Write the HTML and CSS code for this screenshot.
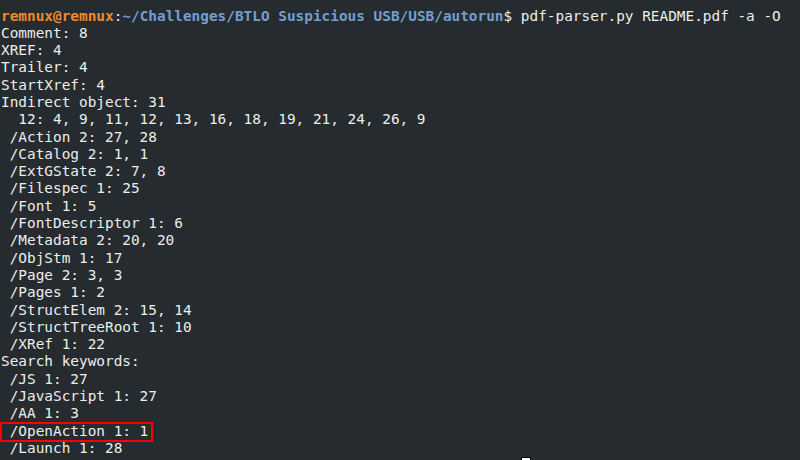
FILE: index.html
```html
<!DOCTYPE html>
<html>
<head>
<meta charset="utf-8">
<link rel="stylesheet" href="styles.css">
</head>
<body>
<pre class="term"><span class="user">remnux@remnux</span>:<span class="path">~/Challenges/BTLO Suspicious USB/USB/autorun</span>$ pdf-parser.py README.pdf -a -O
Comment: 8
XREF: 4
Trailer: 4
StartXref: 4
Indirect object: 31
  12: 4, 9, 11, 12, 13, 16, 18, 19, 21, 24, 26, 9
 /Action 2: 27, 28
 /Catalog 2: 1, 1
 /ExtGState 2: 7, 8
 /Filespec 1: 25
 /Font 1: 5
 /FontDescriptor 1: 6
 /Metadata 2: 20, 20
 /ObjStm 1: 17
 /Page 2: 3, 3
 /Pages 1: 2
 /StructElem 2: 15, 14
 /StructTreeRoot 1: 10
 /XRef 1: 22
Search keywords:
 /JS 1: 27
 /JavaScript 1: 27
 /AA 1: 3
<span class="mark"> /OpenAction 1: 1</span>
 /Launch 1: 28
</pre>
<span class="cursor"></span>
</body>
</html>
```
FILE: styles.css
```css
html, body {
  margin: 0;
  padding: 0;
  background: #252b2e;
  width: 800px;
  height: 460px;
  overflow: hidden;
}
body {
  position: relative;
}
.term {
  margin: 0;
  padding: 7.5px 0 0 1px;
  font-family: "DejaVu Sans Mono", monospace;
  font-size: 14.4px;
  line-height: 17.3px;
  color: #eceeec;
}
.user {
  color: #ee8a2e;
  font-weight: bold;
}
.path {
  color: #729fcf;
  font-weight: bold;
}
.mark {
  position: relative;
}
.mark::after {
  content: "";
  position: absolute;
  left: -1px;
  right: -5px;
  top: -1px;
  bottom: -3px;
  border: 2px solid #f00;
}
.cursor {
  position: absolute;
  left: 521px;
  top: 457px;
  width: 8px;
  height: 10px;
  background: #fff;
  border: 1px solid #000;
}
```
